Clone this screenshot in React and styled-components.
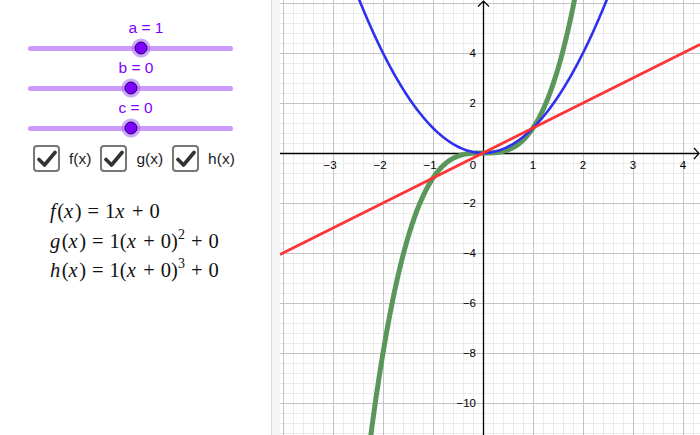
import React from 'react'
import styled, { createGlobalStyle } from 'styled-components'

const GlobalStyle = createGlobalStyle`
  html, body {
    margin: 0;
    padding: 0;
    background: #fff;
    overflow: hidden;
  }
  body {
    font-family: "Liberation Sans", Arial, sans-serif;
  }
`

// graph window: origin at (203, 153) inside the svg, 50px per x unit, 25px per y unit
const W = 420
const H = 435
const OX = 203
const OY = 153
const SX = 50
const SY = 25

const toX = (x) => OX + x * SX
const toY = (y) => OY - y * SY

const sliders = [
  { name: 'a', value: 1 },
  { name: 'b', value: 0 },
  { name: 'c', value: 0 },
]

const TRACK = 205
const sliderPos = (v) => TRACK / 2 + v * 10

const functions = ['f(x)', 'g(x)', 'h(x)']

const buildPath = (fn, from, to) => {
  const pts = []
  for (let px = from; px <= to; px += 1) {
    const x = (px - OX) / SX
    const y = fn(x)
    const py = toY(y)
    if (py < -40 || py > H + 40) continue
    pts.push(`${px},${py.toFixed(2)}`)
  }
  return 'M' + pts.join(' L')
}

const App = () => {
  const gridX = []
  for (let x = 3; x < W; x += 10) gridX.push(x)
  const gridY = []
  for (let y = 3; y < H; y += 10) gridY.push(y)

  const xLabels = [-3, -2, -1, 1, 2, 3, 4]
  const yLabels = [4, 2, -2, -4, -6, -8, -10]

  return (
    <Page>
      <GlobalStyle />
      <Panel>
        <SliderList>
          {sliders.map((s) => (
            <SliderBlock key={s.name}>
              <SliderLabel style={{ marginLeft: sliderPos(s.value) - 12 }}>
                {s.name} = {s.value}
              </SliderLabel>
              <Track>
                <Knob style={{ left: sliderPos(s.value) }} />
              </Track>
            </SliderBlock>
          ))}
        </SliderList>

        <CheckRow>
          {functions.map((f) => (
            <CheckItem key={f}>
              <CheckBox>
                <svg width="20" height="18" viewBox="0 0 20 18">
                  <path d="M2 9.5 L7.5 15 L18 2.5" fill="none" stroke="#333" strokeWidth="3.6" strokeLinecap="round" strokeLinejoin="round" />
                </svg>
              </CheckBox>
              <CheckText>{f}</CheckText>
            </CheckItem>
          ))}
        </CheckRow>

        <Formulas>
          <Formula>
            <I>f</I>(<I>x</I>)<Op>=</Op>1<I>x</I><Op>+</Op>0
          </Formula>
          <Formula>
            <I>g</I>(<I>x</I>)<Op>=</Op>1(<I>x</I><Op>+</Op>0)<Sup>2</Sup><Op>+</Op>0
          </Formula>
          <Formula>
            <I>h</I>(<I>x</I>)<Op>=</Op>1(<I>x</I><Op>+</Op>0)<Sup>3</Sup><Op>+</Op>0
          </Formula>
        </Formulas>
      </Panel>
      <Gutter />
      <GraphArea>
        <svg width={W} height={H} viewBox={`0 0 ${W} ${H}`}>
          <rect width={W} height={H} fill="#fff" />
          {gridX.filter((x) => (x - 3) % 50 !== 0).map((x) => (
            <line key={'mx' + x} x1={x + 0.5} y1="0" x2={x + 0.5} y2={H} stroke="#ebebeb" strokeWidth="1" />
          ))}
          {gridY.filter((y) => (y - 3) % 50 !== 0).map((y) => (
            <line key={'my' + y} x1="0" y1={y + 0.5} x2={W} y2={y + 0.5} stroke="#ebebeb" strokeWidth="1" />
          ))}
          {gridX.filter((x) => (x - 3) % 50 === 0).map((x) => (
            <line key={'Mx' + x} x1={x + 0.5} y1="0" x2={x + 0.5} y2={H} stroke="#c4c4c4" strokeWidth="1" />
          ))}
          {gridY.filter((y) => (y - 3) % 50 === 0).map((y) => (
            <line key={'My' + y} x1="0" y1={y + 0.5} x2={W} y2={y + 0.5} stroke="#c4c4c4" strokeWidth="1" />
          ))}

          <line x1="0" y1={OY + 0.5} x2={W - 1} y2={OY + 0.5} stroke="#000" strokeWidth="1.3" />
          <line x1={OX + 0.5} y1="1" x2={OX + 0.5} y2={H} stroke="#000" strokeWidth="1.3" />
          <path d={`M${W - 6} ${OY - 5} L${W - 1} ${OY + 0.5} L${W - 6} ${OY + 6}`} fill="none" stroke="#000" strokeWidth="1.2" />
          <path d={`M${OX - 5} 6.5 L${OX + 0.5} 1 L${OX + 6} 6.5`} fill="none" stroke="#000" strokeWidth="1.2" />

          <g fontFamily="Liberation Sans, Arial, sans-serif" fontSize="11.5" fill="#000">
            {xLabels.map((v) => (
              <text key={'xl' + v} x={toX(v) + (v < 0 ? -3 : 0)} y={OY + 16} textAnchor="middle">
                {v < 0 ? '\u2212' + Math.abs(v) : v}
              </text>
            ))}
            <text x={OX - 10} y={OY + 16} textAnchor="middle">0</text>
            {yLabels.map((v) => (
              <text key={'yl' + v} x={OX - 7} y={toY(v) + 4} textAnchor="end">
                {v < 0 ? '\u2212' + Math.abs(v) : v}
              </text>
            ))}
          </g>

          <path d={buildPath((x) => x * x * x, 0, W)} fill="none" stroke="#5a975a" strokeWidth="5" strokeLinejoin="round" />
          <path d={buildPath((x) => x * x, 0, W)} fill="none" stroke="#3030f0" strokeWidth="2.6" strokeLinejoin="round" />
          <path d={buildPath((x) => x, 0, W)} fill="none" stroke="#ff3333" strokeWidth="2.6" />
        </svg>
      </GraphArea>
    </Page>
  )
}

const Page = styled.div`
  display: flex;
  width: 700px;
  height: 435px;
  overflow: hidden;
`

const Panel = styled.div`
  width: 272px;
  flex-shrink: 0;
  border-right: 1px solid #dcdcdc;
  box-sizing: border-box;
  padding-top: 18px;
  display: flex;
  flex-direction: column;
`

const Gutter = styled.div`
  width: 8px;
  flex-shrink: 0;
  background: #f5f5f5;
`

const GraphArea = styled.div`
  flex: 1;
  overflow: hidden;

  svg {
    display: block;
  }
`

const SliderList = styled.div`
  display: flex;
  flex-direction: column;
  padding-left: 28px;
`

const SliderBlock = styled.div`
  height: 40px;
  display: flex;
  flex-direction: column;
`

const SliderLabel = styled.div`
  height: 20px;
  line-height: 20px;
  font-size: 15.5px;
  color: #7f00ff;
  white-space: nowrap;
`

const Track = styled.div`
  position: relative;
  width: 205px;
  height: 5px;
  margin-top: 7.5px;
  border-radius: 3px;
  background: #cc99ff;
`

const Knob = styled.div`
  position: absolute;
  top: 50%;
  width: 11px;
  height: 11px;
  border-radius: 50%;
  background: #7f00ff;
  border: 1px solid #2b0050;
  box-shadow: 0 0 0 3px rgba(170, 110, 255, 0.6);
  transform: translate(-50%, -50%);
`

const CheckRow = styled.div`
  display: flex;
  align-items: center;
  gap: 9px;
  padding-left: 33px;
  margin-top: 7px;
`

const CheckItem = styled.div`
  display: flex;
  align-items: center;
  gap: 9px;
`

const CheckBox = styled.div`
  width: 23px;
  height: 23px;
  border: 2px solid #777;
  border-radius: 4px;
  display: flex;
  align-items: center;
  justify-content: center;
  background: #fff;
`

const CheckText = styled.span`
  font-size: 15.5px;
  color: #222;
`

const Formulas = styled.div`
  display: flex;
  flex-direction: column;
  padding-left: 50px;
  margin-top: 25px;
  gap: 1px;
`

const Formula = styled.div`
  font-family: "Liberation Serif", "Times New Roman", serif;
  font-size: 20.5px;
  line-height: 28.5px;
  color: #111;
  white-space: nowrap;
`

const I = styled.i`
  font-style: italic;
  padding-right: 1.5px;
`

const Op = styled.span`
  padding: 0 6px;
`

const Sup = styled.sup`
  font-size: 14px;
  vertical-align: 9px;
  line-height: 0;
`

export default App
